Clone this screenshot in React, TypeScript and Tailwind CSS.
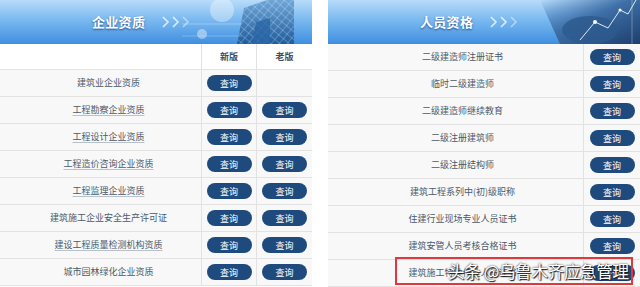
import React from "react";

const font = { fontFamily: '"Noto Sans CJK SC", "Noto Sans", sans-serif' };

type Row = { name: string; newer: boolean; older: boolean; link?: boolean };

const companyRows: Row[] = [
  { name: "建筑业企业资质", newer: true, older: false },
  { name: "工程勘察企业资质", newer: true, older: true, link: true },
  { name: "工程设计企业资质", newer: true, older: true, link: true },
  { name: "工程造价咨询企业资质", newer: true, older: true, link: true },
  { name: "工程监理企业资质", newer: true, older: true, link: true },
  { name: "建筑施工企业安全生产许可证", newer: true, older: true },
  { name: "建设工程质量检测机构资质", newer: true, older: true, link: true },
  { name: "城市园林绿化企业资质", newer: true, older: true },
];

const personRows = [
  "二级建造师注册证书",
  "临时二级建造师",
  "二级建造师继续教育",
  "二级注册建筑师",
  "二级注册结构师",
  "建筑工程系列中(初)级职称",
  "住建行业现场专业人员证书",
  "建筑安管人员考核合格证书",
  "建筑施工特种作业人员证书",
];

function QueryButton() {
  return (
    <span className="inline-flex items-center justify-center w-[45px] h-[16px] rounded-full bg-[#1f4a7d] text-white text-[9px] leading-none">
      查询
    </span>
  );
}

function Chevrons() {
  return (
    <svg width="30" height="14" viewBox="0 0 30 14" className="ml-4">
      {[0, 10, 20].map((x, i) => (
        <polyline
          key={x}
          points={`${x + 2},2 ${x + 7},7 ${x + 2},12`}
          fill="none"
          stroke={i === 2 ? "rgba(255,255,255,0.45)" : "rgba(255,255,255,0.75)"}
          strokeWidth="1.6"
        />
      ))}
    </svg>
  );
}

function Title({ text }: { text: string }) {
  return (
    <span
      className="text-white text-[13px] font-bold tracking-[0.3px] [text-shadow:0_1px_2px_rgba(20,60,120,0.8)]"
      style={{ fontFamily: '"Noto Sans CJK SC", "Noto Sans", serif' }}
    >
      {text}
    </span>
  );
}

function BuildingArt() {
  return (
    <svg className="absolute right-0 top-0" width="130" height="44" viewBox="0 0 130 44">
      <defs>
        <pattern id="glass" width="6" height="6" patternUnits="userSpaceOnUse" patternTransform="rotate(40)">
          <path d="M0 0 L0 6 M0 0 L6 0" stroke="rgba(255,255,255,0.55)" strokeWidth="0.8" />
        </pattern>
        <linearGradient id="bld" x1="0" y1="0" x2="0" y2="1">
          <stop offset="0" stopColor="#6ea6d8" />
          <stop offset="1" stopColor="#1f5c9c" />
        </linearGradient>
      </defs>
      <circle cx="40" cy="10" r="12" fill="rgba(255,255,255,0.35)" />
      <circle cx="20" cy="34" r="5" fill="rgba(255,255,255,0.4)" />
      <polygon points="55,44 62,8 85,0 112,0 112,44" fill="url(#bld)" />
      <polygon points="55,44 62,8 85,0 112,0 112,44" fill="url(#glass)" />
      <polygon points="70,44 74,22 88,18 88,44" fill="#2a67a8" opacity="0.8" />
      <line x1="0" y1="24" x2="60" y2="24" stroke="rgba(255,255,255,0.5)" strokeWidth="0.6" />
      <line x1="0" y1="36" x2="60" y2="36" stroke="rgba(255,255,255,0.4)" strokeWidth="0.6" />
    </svg>
  );
}

function ChartArt() {
  return (
    <svg className="absolute right-0 top-0" width="120" height="44" viewBox="0 0 120 44">
      <defs>
        <linearGradient id="dk" x1="0" y1="0" x2="1" y2="1">
          <stop offset="0" stopColor="rgba(70,120,180,0)" />
          <stop offset="0.45" stopColor="#3e6fa6" />
          <stop offset="1" stopColor="#1d3f6e" />
        </linearGradient>
      </defs>
      <polygon points="20,0 120,0 120,44 40,44" fill="url(#dk)" />
      <ellipse cx="70" cy="30" rx="28" ry="14" fill="#2d5a8e" opacity="0.8" />
      <polyline points="60,40 75,22 88,28 100,10 108,14 116,0" fill="none" stroke="rgba(255,255,255,0.85)" strokeWidth="1" />
      <circle cx="75" cy="22" r="2" fill="#ffffff" />
      <circle cx="100" cy="10" r="1.5" fill="#ffffff" />
      <line x1="112" y1="0" x2="112" y2="44" stroke="rgba(255,255,255,0.5)" strokeWidth="0.6" />
    </svg>
  );
}

function Header({ text, art }: { text: string; art: React.ReactNode }) {
  return (
    <div className="relative h-[44px] overflow-hidden bg-[linear-gradient(180deg,#b8dcfa_0%,#7ab9f0_45%,#3f8fe0_100%)]">
      {art}
      <div className="relative flex h-full items-center pl-[92px]">
        <Title text={text} />
        <Chevrons />
      </div>
    </div>
  );
}

export default function App() {
  return (
    <div className="relative w-[640px] h-[287px] overflow-hidden bg-white text-[#4b5a6a]" style={font}>
      <div className="flex gap-[16px]">
        {/* 企业资质 */}
        <div className="w-[312px]">
          <Header text="企业资质" art={<BuildingArt />} />
          <div className="grid grid-cols-[201px_55px_56px] text-[9px]">
            <div className="h-[26px] border-b border-[#e2e2e2] bg-white" />
            <div className="flex h-[26px] items-center justify-center border-b border-l border-[#e2e2e2] bg-white font-bold text-[#3f4f63]">新版</div>
            <div className="flex h-[26px] items-center justify-center border-b border-l border-[#e2e2e2] bg-white font-bold text-[#3f4f63]">老版</div>
            {companyRows.map((r) => (
              <React.Fragment key={r.name}>
                <div className="flex h-[27px] items-center justify-center border-b border-[#e2e2e2] bg-[#f8f8f8] pl-4">
                  <span className={r.link ? "underline decoration-[#b9c2cc] underline-offset-2" : ""}>{r.name}</span>
                </div>
                <div className="flex h-[27px] items-center justify-center border-b border-l border-[#e2e2e2] bg-[#f8f8f8]">
                  {r.newer && <QueryButton />}
                </div>
                <div className="flex h-[27px] items-center justify-center border-b border-l border-[#e2e2e2] bg-[#f8f8f8]">
                  {r.older && <QueryButton />}
                </div>
              </React.Fragment>
            ))}
          </div>
        </div>

        {/* 人员资格 */}
        <div className="w-[312px]">
          <Header text="人员资格" art={<ChartArt />} />
          <div className="grid grid-cols-[255px_57px] text-[9px]">
            {personRows.map((name) => (
              <React.Fragment key={name}>
                <div className="flex h-[27px] items-center justify-center border-b border-[#e2e2e2] bg-[#f8f8f8] pl-[14px]">
                  {name}
                </div>
                <div className="flex h-[27px] items-center justify-center border-b border-l border-[#e2e2e2] bg-[#f8f8f8]">
                  <QueryButton />
                </div>
              </React.Fragment>
            ))}
          </div>
        </div>
      </div>

      {/* annotation + watermark */}
      <div className="absolute left-[395px] top-[257px] h-[28px] w-[238px] border-2 border-[#e0383b]" />
      <div
        className="absolute left-[448px] top-[258px] whitespace-nowrap text-[16.5px] leading-[26px] tracking-[-0.3px] text-white [text-shadow:0_0_2px_#1a1a1a,1px_1px_1px_#1a1a1a]"
        style={font}
      >
        头条 @乌鲁木齐应急管理
      </div>
    </div>
  );
}
